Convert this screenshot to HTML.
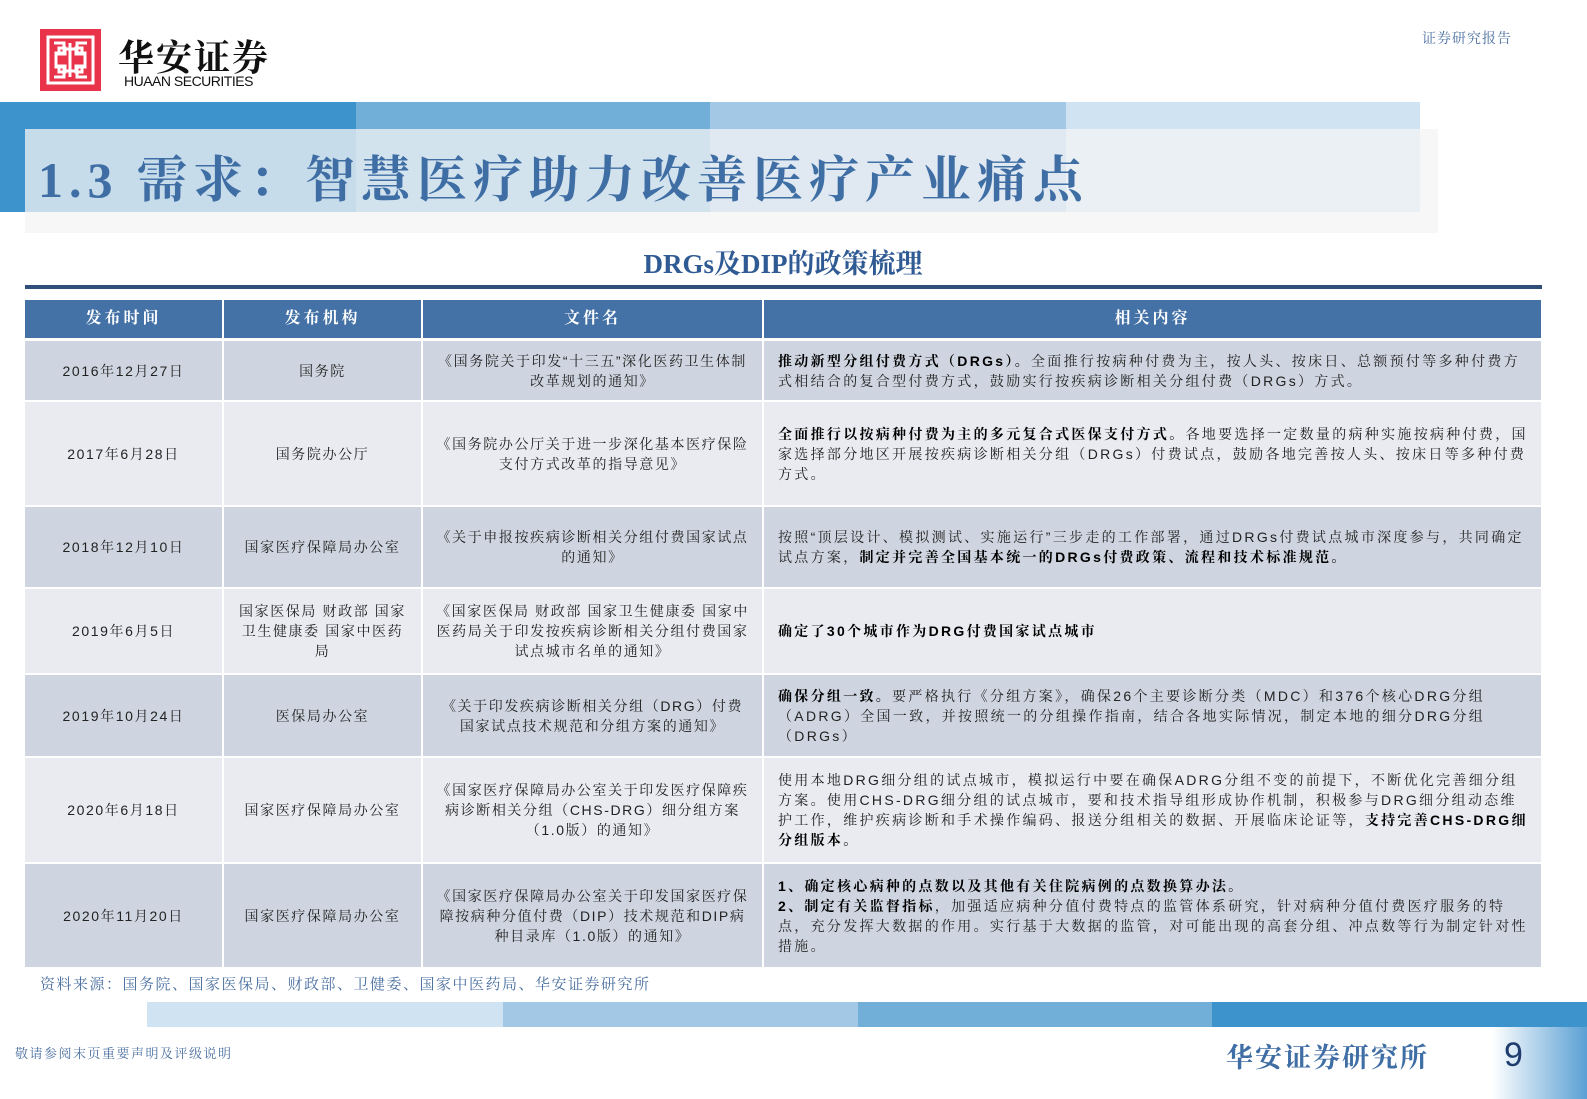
<!DOCTYPE html>
<html><head><meta charset="utf-8">
<style>
*{margin:0;padding:0;box-sizing:border-box}
body{width:1587px;height:1099px;background:#fff;position:relative;overflow:hidden;font-family:"Liberation Sans","Noto Serif CJK SC","Noto Sans CJK SC",serif}
.a{position:absolute}
.cell{position:absolute;display:flex;align-items:center;justify-content:center;text-align:center;font-size:14px;color:#222;line-height:20px;letter-spacing:1.6px;padding:0 12px;font-family:"Liberation Sans","Noto Serif CJK SC",serif}
.l{justify-content:flex-start;text-align:left;letter-spacing:2.3px;padding:0 10px 0 14px}
.h{background:#4472a6;color:#fff;font-weight:bold;font-size:16px;letter-spacing:3px}
.d{background:#cfd5e0}.e{background:#e9ebf0}
b{font-weight:bold;color:#000}
</style></head><body>
<svg class="a" style="left:40px;top:29px" width="61" height="62" viewBox="0 0 61 62">
<rect width="61" height="62" fill="#e8334a"/>
<g fill="none" stroke="#fff" stroke-width="3">
<path d="M8 8V54H53V8ZM8 8"/>
<path d="M14 14h10v10h-8v14h8v10h-10M47 14h-10v10h8v14h-8v10h10"/>
<path d="M24 20h13M24 42h13M30 14v34M19 19h6v6h-6zM36 19h6v6h-6zM19 37h6v6h-6zM36 37h6v6h-6z"/>
</g></svg>
<div class="a" style="left:118px;top:30px;font-size:36px;font-family:'Noto Serif CJK SC',serif;font-weight:bold;letter-spacing:2px;color:#111">华安证券</div>
<div class="a" style="left:124px;top:73px;font-size:14px;color:#111;letter-spacing:-0.5px">HUAAN SECURITIES</div>
<div class="a" style="left:1422px;top:28px;font-size:14px;color:#4a6fa0;letter-spacing:1px">证券研究报告</div>

<div class="a" style="left:0;top:102px;width:356px;height:110px;background:#3d93cc"></div>
<div class="a" style="left:356px;top:102px;width:354px;height:110px;background:#71afd9"></div>
<div class="a" style="left:710px;top:102px;width:356px;height:110px;background:#a2c8e6"></div>
<div class="a" style="left:1066px;top:102px;width:354px;height:110px;background:#d0e3f2"></div>
<div class="a" style="left:25px;top:129px;width:1413px;height:104px;background:rgba(244,244,244,0.75)"></div>
<div class="a" style="left:38px;top:140px;font-size:50px;color:#3f6ea5;letter-spacing:6px;font-family:'Liberation Serif','Noto Serif CJK SC',serif;font-weight:bold">1.3 需求：智慧医疗助力改善医疗产业痛点</div>

<div class="a" style="left:0;top:242px;width:1566px;text-align:center;font-size:27px;color:#2f5a93;font-weight:bold;font-family:'Liberation Serif','Noto Serif CJK SC',serif">DRGs及DIP的政策梳理</div>
<div class="a" style="left:25px;top:285px;width:1517px;height:4px;background:#2f4f7a"></div>

<div class="cell h" style="left:25px;top:300px;width:197px;height:38px">发布时间</div>
<div class="cell h" style="left:224px;top:300px;width:197px;height:38px">发布机构</div>
<div class="cell h" style="left:423px;top:300px;width:339px;height:38px">文件名</div>
<div class="cell h" style="left:764px;top:300px;width:777px;height:38px">相关内容</div>

<div class="cell d" style="left:25px;top:341px;width:197px;height:59px">2016年12月27日</div>
<div class="cell d" style="left:224px;top:341px;width:197px;height:59px">国务院</div>
<div class="cell d" style="left:423px;top:341px;width:339px;height:59px">《国务院关于印发“十三五”深化医药卫生体制改革规划的通知》</div>
<div class="cell d l" style="left:764px;top:341px;width:777px;height:59px"><span><b>推动新型分组付费方式（DRGs）。</b>全面推行按病种付费为主，按人头、按床日、总额预付等多种付费方式相结合的复合型付费方式，鼓励实行按疾病诊断相关分组付费（DRGs）方式。</span></div>

<div class="cell e" style="left:25px;top:402px;width:197px;height:103px">2017年6月28日</div>
<div class="cell e" style="left:224px;top:402px;width:197px;height:103px">国务院办公厅</div>
<div class="cell e" style="left:423px;top:402px;width:339px;height:103px">《国务院办公厅关于进一步深化基本医疗保险支付方式改革的指导意见》</div>
<div class="cell e l" style="left:764px;top:402px;width:777px;height:103px"><span><b>全面推行以按病种付费为主的多元复合式医保支付方式。</b>各地要选择一定数量的病种实施按病种付费，国家选择部分地区开展按疾病诊断相关分组（DRGs）付费试点，鼓励各地完善按人头、按床日等多种付费方式。</span></div>

<div class="cell d" style="left:25px;top:507px;width:197px;height:80px">2018年12月10日</div>
<div class="cell d" style="left:224px;top:507px;width:197px;height:80px">国家医疗保障局办公室</div>
<div class="cell d" style="left:423px;top:507px;width:339px;height:80px">《关于申报按疾病诊断相关分组付费国家试点的通知》</div>
<div class="cell d l" style="left:764px;top:507px;width:777px;height:80px"><span>按照“顶层设计、模拟测试、实施运行”三步走的工作部署，通过DRGs付费试点城市深度参与，共同确定试点方案，<b>制定并完善全国基本统一的DRGs付费政策、流程和技术标准规范。</b></span></div>

<div class="cell e" style="left:25px;top:589px;width:197px;height:84px">2019年6月5日</div>
<div class="cell e" style="left:224px;top:589px;width:197px;height:84px">国家医保局 财政部 国家卫生健康委 国家中医药局</div>
<div class="cell e" style="left:423px;top:589px;width:339px;height:84px">《国家医保局 财政部 国家卫生健康委 国家中医药局关于印发按疾病诊断相关分组付费国家试点城市名单的通知》</div>
<div class="cell e l" style="left:764px;top:589px;width:777px;height:84px"><b>确定了30个城市作为DRG付费国家试点城市</b></div>

<div class="cell d" style="left:25px;top:675px;width:197px;height:81px">2019年10月24日</div>
<div class="cell d" style="left:224px;top:675px;width:197px;height:81px">医保局办公室</div>
<div class="cell d" style="left:423px;top:675px;width:339px;height:81px">《关于印发疾病诊断相关分组（DRG）付费国家试点技术规范和分组方案的通知》</div>
<div class="cell d l" style="left:764px;top:675px;width:777px;height:81px"><span><b>确保分组一致。</b>要严格执行《分组方案》，确保26个主要诊断分类（MDC）和376个核心DRG分组（ADRG）全国一致，并按照统一的分组操作指南，结合各地实际情况，制定本地的细分DRG分组（DRGs）</span></div>

<div class="cell e" style="left:25px;top:758px;width:197px;height:104px">2020年6月18日</div>
<div class="cell e" style="left:224px;top:758px;width:197px;height:104px">国家医疗保障局办公室</div>
<div class="cell e" style="left:423px;top:758px;width:339px;height:104px">《国家医疗保障局办公室关于印发医疗保障疾病诊断相关分组（CHS-DRG）细分组方案（1.0版）的通知》</div>
<div class="cell e l" style="left:764px;top:758px;width:777px;height:104px"><span>使用本地DRG细分组的试点城市，模拟运行中要在确保ADRG分组不变的前提下，不断优化完善细分组方案。使用CHS-DRG细分组的试点城市，要和技术指导组形成协作机制，积极参与DRG细分组动态维护工作，维护疾病诊断和手术操作编码、报送分组相关的数据、开展临床论证等，<b>支持完善CHS-DRG细分组版本。</b></span></div>

<div class="cell d" style="left:25px;top:864px;width:197px;height:103px">2020年11月20日</div>
<div class="cell d" style="left:224px;top:864px;width:197px;height:103px">国家医疗保障局办公室</div>
<div class="cell d" style="left:423px;top:864px;width:339px;height:103px">《国家医疗保障局办公室关于印发国家医疗保障按病种分值付费（DIP）技术规范和DIP病种目录库（1.0版）的通知》</div>
<div class="cell d l" style="left:764px;top:864px;width:777px;height:103px"><span><b>1、确定核心病种的点数以及其他有关住院病例的点数换算办法。</b><br><b>2、制定有关监督指标</b>，加强适应病种分值付费特点的监管体系研究，针对病种分值付费医疗服务的特点，充分发挥大数据的作用。实行基于大数据的监管，对可能出现的高套分组、冲点数等行为制定针对性措施。</span></div>

<div class="a" style="left:40px;top:973px;font-size:15px;color:#4a6fa0;letter-spacing:1.5px">资料来源：国务院、国家医保局、财政部、卫健委、国家中医药局、华安证券研究所</div>

<div class="a" style="left:147px;top:1002px;width:356px;height:25px;background:#d0e3f2"></div>
<div class="a" style="left:503px;top:1002px;width:355px;height:25px;background:#a2c8e6"></div>
<div class="a" style="left:858px;top:1002px;width:354px;height:25px;background:#71afd9"></div>
<div class="a" style="left:1212px;top:1002px;width:375px;height:25px;background:#3d93cc"></div>
<div class="a" style="left:1492px;top:1027px;width:95px;height:72px;background:linear-gradient(90deg,#fff,#5aa0d4)"></div>
<div class="a" style="left:15px;top:1043px;font-size:13px;color:#4a6fa0;letter-spacing:1.5px">敬请参阅末页重要声明及评级说明</div>
<div class="a" style="left:1226px;top:1036px;font-size:27px;color:#3f6ea5;font-weight:bold;letter-spacing:2px">华安证券研究所</div>
<div class="a" style="left:1504px;top:1036px;font-size:34px;color:#1f3c6e">9</div>
</body></html>
